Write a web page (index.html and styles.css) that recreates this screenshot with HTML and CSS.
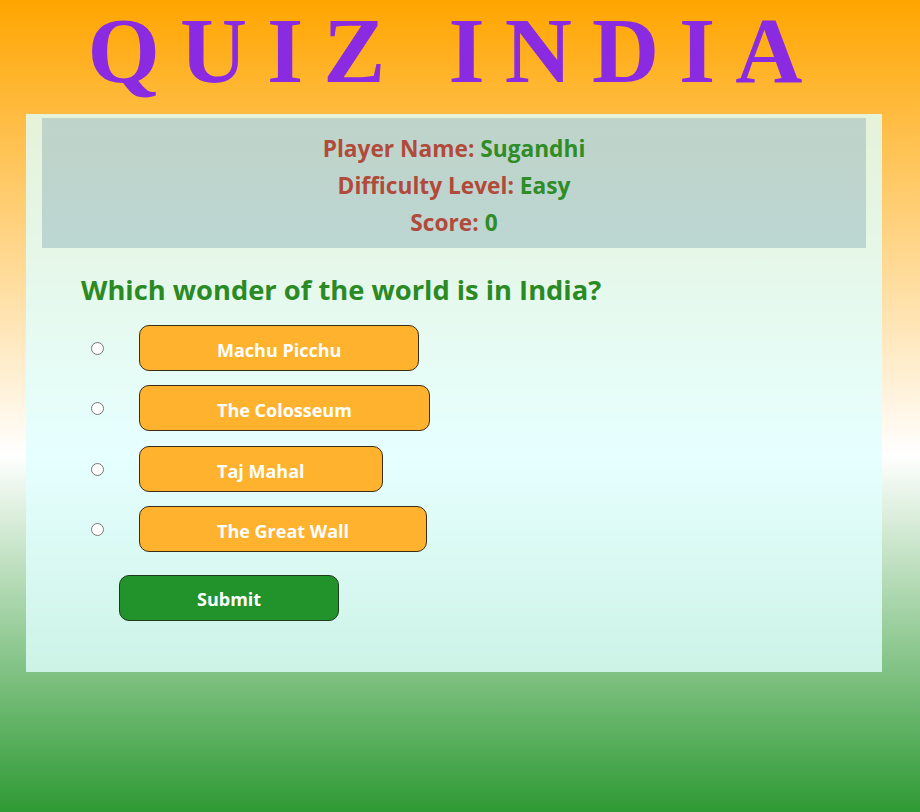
FILE: index.html
```html
<!DOCTYPE html>
<html lang="en">
<head>
<meta charset="utf-8">
<title>Quiz India</title>
<link rel="stylesheet" href="styles.css">
</head>
<body>
<h1 class="title">QUIZ INDIA</h1>
<main class="panel">
  <section class="info">
    <p class="info-line"><span class="label">Player Name:</span> <span class="value">Sugandhi</span></p>
    <p class="info-line"><span class="label">Difficulty Level:</span> <span class="value">Easy</span></p>
    <p class="info-line"><span class="label">Score:</span> <span class="value">0</span></p>
  </section>
  <form class="quiz">
    <h2 class="question">Which wonder of the world is in India?</h2>
    <div class="options">
      <label class="option"><input type="radio" name="answer" class="radio"><span class="choice">Machu Picchu</span></label>
      <label class="option"><input type="radio" name="answer" class="radio"><span class="choice">The Colosseum</span></label>
      <label class="option"><input type="radio" name="answer" class="radio"><span class="choice">Taj Mahal</span></label>
      <label class="option"><input type="radio" name="answer" class="radio"><span class="choice">The Great Wall</span></label>
    </div>
    <button type="button" class="submit">Submit</button>
  </form>
</main>
</body>
</html>
```
FILE: styles.css
```css
html, body {
  margin: 0;
  padding: 0;
}
body {
  min-height: 812px;
  background: linear-gradient(to bottom, #ffa500 0%, #ffffff 56%, #2e9a33 100%);
  font-family: "Open Sans", "Noto Sans", sans-serif;
}
.title {
  margin: 0 0 17px 0;
  padding: 4px 10px 0 0;
  text-align: center;
  font-family: "Liberation Serif", "Times New Roman", serif;
  font-weight: bold;
  font-size: 93px;
  line-height: 93px;
  letter-spacing: 20px;
  color: #8a2be2;
}
.panel {
  margin: 0 38px 0 26px;
  height: 558px;
  box-sizing: border-box;
  padding: 4px 16px 0 16px;
  background: rgba(224, 255, 255, 0.8);
}
.info {
  height: 130px;
  box-sizing: border-box;
  padding-top: 12px;
  background: linear-gradient(to bottom, #bfd4c9, #bcd6d2);
  text-align: center;
}
.info-line {
  margin: 0;
  font-size: 22.7px;
  font-weight: 700;
  line-height: 37px;
}
.label {
  color: #b14a3b;
}
.value {
  color: #2f8c26;
}
.quiz {
  padding-left: 39px;
}
.question {
  margin: 24px 0 17px 0;
  font-size: 27.3px;
  font-weight: 700;
  line-height: 36px;
  color: #2a8a24;
}
.options {
  display: flex;
  flex-direction: column;
  gap: 14.3px;
}
.option {
  display: flex;
  align-items: center;
  gap: 35px;
  padding-left: 10px;
}
.radio {
  margin: 1px 0 0 0;
  width: 13px;
  height: 13px;
}
.choice {
  display: inline-block;
  height: 46px;
  box-sizing: border-box;
  padding: 0 77px;
  line-height: 48px;
  border: 1px solid #3b2d14;
  border-radius: 10px;
  background: #feb22e;
  color: #ffffff;
  font-size: 18px;
  font-weight: 700;
}
.submit {
  display: block;
  margin: 23px 0 0 38px;
  height: 46px;
  padding: 2px 77px 0 77px;
  border: 1px solid #1d3b1a;
  border-radius: 10px;
  background: #22922a;
  color: #ffffff;
  font-family: inherit;
  font-size: 18px;
  font-weight: 700;
}
```
